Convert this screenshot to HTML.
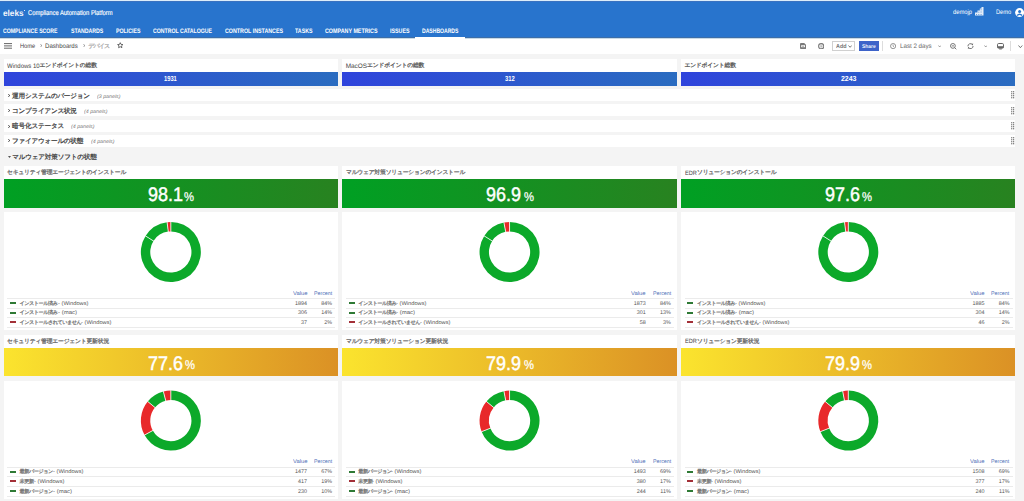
<!DOCTYPE html><html><head><meta charset="utf-8"><style>
*{margin:0;padding:0;box-sizing:border-box}
html,body{width:1024px;height:501px;overflow:hidden;background:#f4f4f4;font-family:"Liberation Sans",sans-serif;color:#333;text-rendering:geometricPrecision}
.a{position:absolute;white-space:nowrap}
.r{position:absolute}
.j{display:inline-block;text-align:center}
</style></head><body>
<div class="r" style="left:0;top:0;width:1024px;height:1px;background:#dcedfa"></div>
<div class="r" style="left:0;top:1px;width:1024px;height:1px;background:#3a72c0"></div>
<div class="r" style="left:0;top:2px;width:1024px;height:35px;background:#2874cd"></div>
<div class="a" style="left:2.90px;top:8.50px;font-size:8.6px;line-height:8.6px;color:#f2f6fc;font-weight:bold;transform:scaleX(0.9528);transform-origin:0 0;">eleks</div>
<div class="r" style="left:24.2px;top:9.8px;width:0.9px;height:1.5px;background:#fff;opacity:.85"></div>
<div class="a" style="left:28.00px;top:10.50px;font-size:6.9px;line-height:6.9px;color:#fff;font-weight:normal;transform:scaleX(0.8420);transform-origin:0 0;-webkit-text-stroke:0.15px #fff">Compliance Automation Platform</div>
<div class="a" style="left:3.30px;top:28.50px;font-size:6.5px;line-height:6.5px;color:#fff;font-weight:bold;transform:scaleX(0.7942);transform-origin:0 0;">COMPLIANCE SCORE</div>
<div class="a" style="left:70.90px;top:28.50px;font-size:6.5px;line-height:6.5px;color:#fff;font-weight:bold;transform:scaleX(0.8009);transform-origin:0 0;">STANDARDS</div>
<div class="a" style="left:116.00px;top:28.50px;font-size:6.5px;line-height:6.5px;color:#fff;font-weight:bold;transform:scaleX(0.8074);transform-origin:0 0;">POLICIES</div>
<div class="a" style="left:153.00px;top:28.50px;font-size:6.5px;line-height:6.5px;color:#fff;font-weight:bold;transform:scaleX(0.7970);transform-origin:0 0;">CONTROL CATALOGUE</div>
<div class="a" style="left:224.50px;top:28.50px;font-size:6.5px;line-height:6.5px;color:#fff;font-weight:bold;transform:scaleX(0.8180);transform-origin:0 0;">CONTROL INSTANCES</div>
<div class="a" style="left:295.00px;top:28.50px;font-size:6.5px;line-height:6.5px;color:#fff;font-weight:bold;transform:scaleX(0.8116);transform-origin:0 0;">TASKS</div>
<div class="a" style="left:325.00px;top:28.50px;font-size:6.5px;line-height:6.5px;color:#fff;font-weight:bold;transform:scaleX(0.8243);transform-origin:0 0;">COMPANY METRICS</div>
<div class="a" style="left:390.00px;top:28.50px;font-size:6.5px;line-height:6.5px;color:#fff;font-weight:bold;transform:scaleX(0.8178);transform-origin:0 0;">ISSUES</div>
<div class="a" style="left:422.00px;top:28.50px;font-size:6.5px;line-height:6.5px;color:#fff;font-weight:bold;transform:scaleX(0.7812);transform-origin:0 0;">DASHBOARDS</div>
<div class="a" style="left:952.90px;top:9.50px;font-size:6.4px;line-height:6.4px;color:#fff;font-weight:normal;transform:scaleX(0.9109);transform-origin:0 0;">demojp</div>
<svg class="a" style="left:975px;top:7.3px" width="8.5" height="8.5" viewBox="0 0 8.5 8.5"><path d="M0,8.5 V5.5 H2.5 V3.5 H4.8 V1.5 H6.5 V0 H8.5 V8.5 Z" fill="#e3ecf8"/><path d="M1,7.5 h1 M3.3,7.5 h1 M5.6,7.5 h1 M5.6,5 h1 M3.3,5.2 h1 M5.6,2.8 h1" stroke="#2874cd" stroke-width="0.7"/></svg>
<div class="a" style="left:996.00px;top:9.50px;font-size:6.4px;line-height:6.4px;color:#fff;font-weight:normal;transform:scaleX(0.8908);transform-origin:0 0;">Demo</div>
<svg class="a" style="left:1014.5px;top:8px" width="10" height="10" viewBox="0 0 10 10"><circle cx="4.6" cy="4.6" r="4.5" fill="#fff"/><circle cx="4.6" cy="3.5" r="1.5" fill="#2874cd"/><path d="M2.1,7.6 Q4.6,4.9 7.1,7.6" stroke="#2874cd" stroke-width="1.4" fill="none"/></svg>
<div class="r" style="left:0;top:37px;width:1024px;height:1px;background:#3d6ea8"></div>
<div class="r" style="left:0;top:38px;width:1024px;height:1px;background:#c8dae6"></div>
<div class="r" style="left:0;top:39px;width:1024px;height:14.5px;background:#fff"></div>
<div class="r" style="left:415.3px;top:37.2px;width:49.3px;height:1.8px;background:#fff"></div>
<svg class="a" style="left:3.8px;top:43.2px" width="8.2" height="6" viewBox="0 0 8.2 6"><path d="M0,0.6 H8.2 M0,2.9 H8.2 M0,5.2 H8.2" stroke="#555" stroke-width="0.9"/></svg>
<div class="a" style="left:19.70px;top:43.50px;font-size:6.4px;line-height:6.4px;color:#444;font-weight:normal;transform:scaleX(0.8908);transform-origin:0 0;">Home</div>
<svg class="a" style="left:39.5px;top:44px" width="2.6" height="3.2" viewBox="0 0 2.6 3.2"><path d="M0.4,0.3 L2,1.6 L0.4,2.9" fill="none" stroke="#777" stroke-width="0.75"/></svg>
<div class="a" style="left:45.00px;top:43.50px;font-size:6.4px;line-height:6.4px;color:#444;font-weight:normal;transform:scaleX(0.9487);transform-origin:0 0;">Dashboards</div>
<svg class="a" style="left:82.7px;top:44px" width="2.6" height="3.2" viewBox="0 0 2.6 3.2"><path d="M0.4,0.3 L2,1.6 L0.4,2.9" fill="none" stroke="#777" stroke-width="0.75"/></svg>
<div class="a" style="left:88.20px;top:43.50px;font-size:6.1px;line-height:6.1px;color:#999;font-weight:normal;"><span class="j" style="width:5.30px;color:#aaa;-webkit-text-stroke:0.25px #aaa">デ</span><span class="j" style="width:5.30px;color:#aaa;-webkit-text-stroke:0.25px #aaa">バ</span><span class="j" style="width:5.30px;color:#aaa;-webkit-text-stroke:0.25px #aaa">イ</span><span class="j" style="width:5.30px;color:#aaa;-webkit-text-stroke:0.25px #aaa">ス</span></div>
<svg class="a" style="left:117.3px;top:42.3px" width="6.5" height="6.5" viewBox="0 0 24 24"><path d="M12,2.5 L14.9,8.9 L21.8,9.6 L16.6,14.2 L18.1,21 L12,17.5 L5.9,21 L7.4,14.2 L2.2,9.6 L9.1,8.9 Z" fill="none" stroke="#333" stroke-width="2.6" stroke-linejoin="round"/></svg>
<svg class="a" style="left:800px;top:43px" width="6.2" height="6" viewBox="0 0 6.2 6"><path d="M0.9,0 H4.2 L6.2,1.8 V5.1 Q6.2,6 5.3,6 H0.9 Q0,6 0,5.1 V0.9 Q0,0 0.9,0 Z" fill="#7a7a7a"/><rect x="1.2" y="2.2" width="3.8" height="2" fill="#fff"/><rect x="2.1" y="2.8" width="2" height="0.9" fill="#999"/></svg>
<svg class="a" style="left:817.8px;top:42.9px" width="6.4" height="6.4" viewBox="0 0 6.4 6.4"><circle cx="3.2" cy="3.2" r="2.6" fill="none" stroke="#7a7a7a" stroke-width="1.1"/><circle cx="3.2" cy="3.2" r="1.3" fill="none" stroke="#bbb" stroke-width="0.6"/><circle cx="3.2" cy="3.2" r="0.6" fill="#888"/></svg>
<div class="r" style="left:832px;top:41.3px;width:23.4px;height:9.3px;border:0.8px solid #d0d0d0;background:#fff"></div>
<div class="a" style="left:835.50px;top:44.50px;font-size:5.8px;line-height:5.8px;color:#777;font-weight:bold;transform:scaleX(0.9307);transform-origin:0 0;">Add</div>
<svg class="a" style="left:847.5px;top:45.3px" width="4.2" height="2.8" viewBox="-0.5 -0.5 4.2 2.8"><path d="M0,0 L1.6,1.8 L3.2,0" fill="none" stroke="#555" stroke-width="0.8"/></svg>
<div class="r" style="left:858.9px;top:41.3px;width:20px;height:9.5px;background:#3d63c9"></div>
<div class="a" style="left:862.20px;top:44.50px;font-size:5.3px;line-height:5.3px;color:#fff;font-weight:bold;transform:scaleX(0.9366);transform-origin:0 0;opacity:.92">Share</div>
<div class="r" style="left:882.3px;top:41px;width:0.8px;height:10px;background:#ddd"></div>
<svg class="a" style="left:889.9px;top:43px" width="6.2" height="6.2" viewBox="0 0 6 6"><circle cx="3" cy="3" r="2.5" fill="none" stroke="#777" stroke-width="0.75"/><path d="M3,1.6 V3.1 L3.9,3.9" stroke="#777" stroke-width="0.65" fill="none"/></svg>
<div class="a" style="left:900.00px;top:43.50px;font-size:6.4px;line-height:6.4px;color:#666;font-weight:normal;transform:scaleX(0.9698);transform-origin:0 0;">Last 2 days</div>
<svg class="a" style="left:937.8px;top:45.3px" width="3.4" height="2.5" viewBox="-0.5 -0.5 3.4 2.5"><path d="M0,0 L1.2,1.5 L2.4,0" fill="none" stroke="#777" stroke-width="0.7"/></svg>
<svg class="a" style="left:949.5px;top:42.8px" width="7" height="7" viewBox="0 0 7 7"><circle cx="2.9" cy="2.9" r="2.4" fill="none" stroke="#666" stroke-width="0.9"/><path d="M1.8,2.9 H4 M4.6,4.6 L6.3,6.3" stroke="#666" stroke-width="0.9"/></svg>
<svg class="a" style="left:967px;top:43px" width="7" height="6.3" viewBox="0 0 7 6.3"><path d="M0.9,3.3 A2.6,2.6 0 0 1 5.5,1.6 M6.1,3 A2.6,2.6 0 0 1 1.5,4.7" stroke="#666" stroke-width="0.9" fill="none"/><path d="M4.4,1 L6.2,0.6 L5.9,2.6Z M2.6,5.3 L0.8,5.7 L1.1,3.7Z" fill="#666"/></svg>
<svg class="a" style="left:983.5px;top:45.3px" width="3.5" height="2.5" viewBox="-0.5 -0.5 3.5 2.5"><path d="M0,0 L1.25,1.5 L2.5,0" fill="none" stroke="#777" stroke-width="0.7"/></svg>
<svg class="a" style="left:997px;top:43px" width="7" height="6.5" viewBox="0 0 7 6.5"><rect x="0.5" y="0.5" width="6" height="4.6" rx="1.2" fill="#fff" stroke="#666" stroke-width="1"/><rect x="0.5" y="3.2" width="6" height="1.9" fill="#666"/><path d="M2.2,6 H4.8" stroke="#666" stroke-width="0.9"/></svg>
<div class="r" style="left:1009.6px;top:41px;width:0.8px;height:10px;background:#ddd"></div>
<svg class="a" style="left:1018px;top:44.8px" width="4.8" height="3.2" viewBox="-0.5 -0.5 4.8 3.2"><path d="M0,0 L1.9,2.2 L3.8,0" fill="none" stroke="#555" stroke-width="0.8"/></svg>
<div class="r" style="left:3.7px;top:59px;width:334.3px;height:26.8px;background:#fff"></div>
<div class="a" style="left:7.00px;top:63.50px;font-size:6.4px;line-height:6.4px;color:#444;font-weight:normal;transform:scaleX(0.9364);transform-origin:0 0;">Windows 10</div>
<div class="a" style="left:39.60px;top:63.50px;font-size:5.8px;line-height:5.8px;color:#444;font-weight:normal;"><span class="j" style="width:5.74px;color:#5a5a5a;-webkit-text-stroke:0.25px #5a5a5a">エ</span><span class="j" style="width:5.74px;color:#5a5a5a;-webkit-text-stroke:0.25px #5a5a5a">ン</span><span class="j" style="width:5.74px;color:#5a5a5a;-webkit-text-stroke:0.25px #5a5a5a">ド</span><span class="j" style="width:5.74px;color:#5a5a5a;-webkit-text-stroke:0.25px #5a5a5a">ポ</span><span class="j" style="width:5.74px;color:#5a5a5a;-webkit-text-stroke:0.25px #5a5a5a">イ</span><span class="j" style="width:5.74px;color:#5a5a5a;-webkit-text-stroke:0.25px #5a5a5a">ン</span><span class="j" style="width:5.74px;color:#5a5a5a;-webkit-text-stroke:0.25px #5a5a5a">ト</span><span class="j" style="width:5.74px;color:#5a5a5a;-webkit-text-stroke:0.25px #5a5a5a">の</span><span class="j" style="width:5.74px;color:#5a5a5a;-webkit-text-stroke:0.25px #5a5a5a">総</span><span class="j" style="width:5.74px;color:#5a5a5a;-webkit-text-stroke:0.25px #5a5a5a">数</span></div>
<div class="r" style="left:3.7px;top:71.8px;width:334.3px;height:14px;background:linear-gradient(90deg,#2f44dc,#2a6cc0)"></div>
<div class="a" style="left:164.45px;top:74.50px;font-size:7.3px;line-height:7.3px;color:#fff;font-weight:bold;transform:scaleX(0.7885);transform-origin:0 0;">1931</div>
<div class="r" style="left:342.4px;top:59px;width:334.30000000000007px;height:26.8px;background:#fff"></div>
<div class="a" style="left:345.70px;top:63.50px;font-size:6.4px;line-height:6.4px;color:#444;font-weight:normal;">MacOS</div>
<div class="a" style="left:367.01px;top:63.50px;font-size:5.8px;line-height:5.8px;color:#444;font-weight:normal;"><span class="j" style="width:5.74px;color:#5a5a5a;-webkit-text-stroke:0.25px #5a5a5a">エ</span><span class="j" style="width:5.74px;color:#5a5a5a;-webkit-text-stroke:0.25px #5a5a5a">ン</span><span class="j" style="width:5.74px;color:#5a5a5a;-webkit-text-stroke:0.25px #5a5a5a">ド</span><span class="j" style="width:5.74px;color:#5a5a5a;-webkit-text-stroke:0.25px #5a5a5a">ポ</span><span class="j" style="width:5.74px;color:#5a5a5a;-webkit-text-stroke:0.25px #5a5a5a">イ</span><span class="j" style="width:5.74px;color:#5a5a5a;-webkit-text-stroke:0.25px #5a5a5a">ン</span><span class="j" style="width:5.74px;color:#5a5a5a;-webkit-text-stroke:0.25px #5a5a5a">ト</span><span class="j" style="width:5.74px;color:#5a5a5a;-webkit-text-stroke:0.25px #5a5a5a">の</span><span class="j" style="width:5.74px;color:#5a5a5a;-webkit-text-stroke:0.25px #5a5a5a">総</span><span class="j" style="width:5.74px;color:#5a5a5a;-webkit-text-stroke:0.25px #5a5a5a">数</span></div>
<div class="r" style="left:342.4px;top:71.8px;width:334.30000000000007px;height:14px;background:linear-gradient(90deg,#2f44dc,#2a6cc0)"></div>
<div class="a" style="left:504.65px;top:74.50px;font-size:7.3px;line-height:7.3px;color:#fff;font-weight:bold;transform:scaleX(0.8041);transform-origin:0 0;">312</div>
<div class="r" style="left:681.1px;top:59px;width:334.4px;height:26.8px;background:#fff"></div>
<div class="a" style="left:684.40px;top:63.50px;font-size:5.8px;line-height:5.8px;color:#444;font-weight:normal;"><span class="j" style="width:5.74px;color:#5a5a5a;-webkit-text-stroke:0.25px #5a5a5a">エ</span><span class="j" style="width:5.74px;color:#5a5a5a;-webkit-text-stroke:0.25px #5a5a5a">ン</span><span class="j" style="width:5.74px;color:#5a5a5a;-webkit-text-stroke:0.25px #5a5a5a">ド</span><span class="j" style="width:5.74px;color:#5a5a5a;-webkit-text-stroke:0.25px #5a5a5a">ポ</span><span class="j" style="width:5.74px;color:#5a5a5a;-webkit-text-stroke:0.25px #5a5a5a">イ</span><span class="j" style="width:5.74px;color:#5a5a5a;-webkit-text-stroke:0.25px #5a5a5a">ン</span><span class="j" style="width:5.74px;color:#5a5a5a;-webkit-text-stroke:0.25px #5a5a5a">ト</span><span class="j" style="width:5.74px;color:#5a5a5a;-webkit-text-stroke:0.25px #5a5a5a">総</span><span class="j" style="width:5.74px;color:#5a5a5a;-webkit-text-stroke:0.25px #5a5a5a">数</span></div>
<div class="r" style="left:681.1px;top:71.8px;width:334.4px;height:14px;background:linear-gradient(90deg,#2f44dc,#2a6cc0)"></div>
<div class="a" style="left:840.55px;top:74.50px;font-size:7.3px;line-height:7.3px;color:#fff;font-weight:bold;transform:scaleX(0.9548);transform-origin:0 0;">2243</div>
<div class="r" style="left:3.7px;top:88.5px;width:1011.8px;height:12.700000000000003px;background:#fff"></div>
<svg class="a" style="left:8.2px;top:94.10000000000001px" width="2.2" height="3" viewBox="0 0 2.2 3"><path d="M0.3,0.2 L1.8,1.5 L0.3,2.8" fill="none" stroke="#333" stroke-width="0.95"/></svg>
<div class="a" style="left:12.10px;top:93.50px;font-size:6.6px;line-height:6.6px;color:#444;font-weight:normal;"><span class="j" style="width:6.47px;color:#444;-webkit-text-stroke:0.25px #444">運</span><span class="j" style="width:6.47px;color:#444;-webkit-text-stroke:0.25px #444">用</span><span class="j" style="width:6.47px;color:#444;-webkit-text-stroke:0.25px #444">シ</span><span class="j" style="width:6.47px;color:#444;-webkit-text-stroke:0.25px #444">ス</span><span class="j" style="width:6.47px;color:#444;-webkit-text-stroke:0.25px #444">テ</span><span class="j" style="width:6.47px;color:#444;-webkit-text-stroke:0.25px #444">ム</span><span class="j" style="width:6.47px;color:#444;-webkit-text-stroke:0.25px #444">の</span><span class="j" style="width:6.47px;color:#444;-webkit-text-stroke:0.25px #444">バ</span><span class="j" style="width:6.47px;color:#444;-webkit-text-stroke:0.25px #444">ー</span><span class="j" style="width:6.47px;color:#444;-webkit-text-stroke:0.25px #444">ジ</span><span class="j" style="width:6.47px;color:#444;-webkit-text-stroke:0.25px #444">ョ</span><span class="j" style="width:6.47px;color:#444;-webkit-text-stroke:0.25px #444">ン</span></div>
<div class="a" style="left:97.10px;top:94.50px;font-size:5.0px;line-height:5.0px;color:#777;font-weight:normal;font-style:italic;transform:scaleX(1.0569);transform-origin:0 0;">(3 panels)</div>
<svg class="a" style="left:1011.3px;top:91.4px" width="3.4" height="8" viewBox="0 0 3.4 8"><rect x="0.2" y="0.2" width="1.1" height="1.1" fill="#555"/><rect x="0.2" y="2.2" width="1.1" height="1.1" fill="#555"/><rect x="0.2" y="4.2" width="1.1" height="1.1" fill="#555"/><rect x="0.2" y="6.2" width="1.1" height="1.1" fill="#555"/><rect x="2.1" y="0.2" width="1.1" height="1.1" fill="#555"/><rect x="2.1" y="2.2" width="1.1" height="1.1" fill="#555"/><rect x="2.1" y="4.2" width="1.1" height="1.1" fill="#555"/><rect x="2.1" y="6.2" width="1.1" height="1.1" fill="#555"/></svg>
<div class="r" style="left:3.7px;top:104px;width:1011.8px;height:12.3px;background:#fff"></div>
<svg class="a" style="left:8.2px;top:109.3px" width="2.2" height="3" viewBox="0 0 2.2 3"><path d="M0.3,0.2 L1.8,1.5 L0.3,2.8" fill="none" stroke="#333" stroke-width="0.95"/></svg>
<div class="a" style="left:12.10px;top:108.50px;font-size:6.6px;line-height:6.6px;color:#444;font-weight:normal;"><span class="j" style="width:6.47px;color:#444;-webkit-text-stroke:0.25px #444">コ</span><span class="j" style="width:6.47px;color:#444;-webkit-text-stroke:0.25px #444">ン</span><span class="j" style="width:6.47px;color:#444;-webkit-text-stroke:0.25px #444">プ</span><span class="j" style="width:6.47px;color:#444;-webkit-text-stroke:0.25px #444">ラ</span><span class="j" style="width:6.47px;color:#444;-webkit-text-stroke:0.25px #444">イ</span><span class="j" style="width:6.47px;color:#444;-webkit-text-stroke:0.25px #444">ア</span><span class="j" style="width:6.47px;color:#444;-webkit-text-stroke:0.25px #444">ン</span><span class="j" style="width:6.47px;color:#444;-webkit-text-stroke:0.25px #444">ス</span><span class="j" style="width:6.47px;color:#444;-webkit-text-stroke:0.25px #444">状</span><span class="j" style="width:6.47px;color:#444;-webkit-text-stroke:0.25px #444">況</span></div>
<div class="a" style="left:84.40px;top:109.50px;font-size:5.0px;line-height:5.0px;color:#777;font-weight:normal;font-style:italic;transform:scaleX(1.0569);transform-origin:0 0;">(4 panels)</div>
<svg class="a" style="left:1011.3px;top:106.6px" width="3.4" height="8" viewBox="0 0 3.4 8"><rect x="0.2" y="0.2" width="1.1" height="1.1" fill="#555"/><rect x="0.2" y="2.2" width="1.1" height="1.1" fill="#555"/><rect x="0.2" y="4.2" width="1.1" height="1.1" fill="#555"/><rect x="0.2" y="6.2" width="1.1" height="1.1" fill="#555"/><rect x="2.1" y="0.2" width="1.1" height="1.1" fill="#555"/><rect x="2.1" y="2.2" width="1.1" height="1.1" fill="#555"/><rect x="2.1" y="4.2" width="1.1" height="1.1" fill="#555"/><rect x="2.1" y="6.2" width="1.1" height="1.1" fill="#555"/></svg>
<div class="r" style="left:3.7px;top:119.7px;width:1011.8px;height:12.3px;background:#fff"></div>
<svg class="a" style="left:8.2px;top:124.5px" width="2.2" height="3" viewBox="0 0 2.2 3"><path d="M0.3,0.2 L1.8,1.5 L0.3,2.8" fill="none" stroke="#333" stroke-width="0.95"/></svg>
<div class="a" style="left:12.10px;top:123.50px;font-size:6.6px;line-height:6.6px;color:#444;font-weight:normal;"><span class="j" style="width:6.47px;color:#444;-webkit-text-stroke:0.25px #444">暗</span><span class="j" style="width:6.47px;color:#444;-webkit-text-stroke:0.25px #444">号</span><span class="j" style="width:6.47px;color:#444;-webkit-text-stroke:0.25px #444">化</span><span class="j" style="width:6.47px;color:#444;-webkit-text-stroke:0.25px #444">ス</span><span class="j" style="width:6.47px;color:#444;-webkit-text-stroke:0.25px #444">テ</span><span class="j" style="width:6.47px;color:#444;-webkit-text-stroke:0.25px #444">ー</span><span class="j" style="width:6.47px;color:#444;-webkit-text-stroke:0.25px #444">タ</span><span class="j" style="width:6.47px;color:#444;-webkit-text-stroke:0.25px #444">ス</span></div>
<div class="a" style="left:71.00px;top:124.50px;font-size:5.0px;line-height:5.0px;color:#777;font-weight:normal;font-style:italic;transform:scaleX(1.0569);transform-origin:0 0;">(4 panels)</div>
<svg class="a" style="left:1011.3px;top:121.8px" width="3.4" height="8" viewBox="0 0 3.4 8"><rect x="0.2" y="0.2" width="1.1" height="1.1" fill="#555"/><rect x="0.2" y="2.2" width="1.1" height="1.1" fill="#555"/><rect x="0.2" y="4.2" width="1.1" height="1.1" fill="#555"/><rect x="0.2" y="6.2" width="1.1" height="1.1" fill="#555"/><rect x="2.1" y="0.2" width="1.1" height="1.1" fill="#555"/><rect x="2.1" y="2.2" width="1.1" height="1.1" fill="#555"/><rect x="2.1" y="4.2" width="1.1" height="1.1" fill="#555"/><rect x="2.1" y="6.2" width="1.1" height="1.1" fill="#555"/></svg>
<div class="r" style="left:3.7px;top:135px;width:1011.8px;height:12.3px;background:#fff"></div>
<svg class="a" style="left:8.2px;top:139.39999999999998px" width="2.2" height="3" viewBox="0 0 2.2 3"><path d="M0.3,0.2 L1.8,1.5 L0.3,2.8" fill="none" stroke="#333" stroke-width="0.95"/></svg>
<div class="a" style="left:12.10px;top:138.50px;font-size:6.6px;line-height:6.6px;color:#444;font-weight:normal;"><span class="j" style="width:6.47px;color:#444;-webkit-text-stroke:0.25px #444">フ</span><span class="j" style="width:6.47px;color:#444;-webkit-text-stroke:0.25px #444">ァ</span><span class="j" style="width:6.47px;color:#444;-webkit-text-stroke:0.25px #444">イ</span><span class="j" style="width:6.47px;color:#444;-webkit-text-stroke:0.25px #444">ア</span><span class="j" style="width:6.47px;color:#444;-webkit-text-stroke:0.25px #444">ウ</span><span class="j" style="width:6.47px;color:#444;-webkit-text-stroke:0.25px #444">ォ</span><span class="j" style="width:6.47px;color:#444;-webkit-text-stroke:0.25px #444">ー</span><span class="j" style="width:6.47px;color:#444;-webkit-text-stroke:0.25px #444">ル</span><span class="j" style="width:6.47px;color:#444;-webkit-text-stroke:0.25px #444">の</span><span class="j" style="width:6.47px;color:#444;-webkit-text-stroke:0.25px #444">状</span><span class="j" style="width:6.47px;color:#444;-webkit-text-stroke:0.25px #444">態</span></div>
<div class="a" style="left:91.10px;top:139.50px;font-size:5.0px;line-height:5.0px;color:#777;font-weight:normal;font-style:italic;transform:scaleX(1.0569);transform-origin:0 0;">(4 panels)</div>
<svg class="a" style="left:1011.3px;top:136.7px" width="3.4" height="8" viewBox="0 0 3.4 8"><rect x="0.2" y="0.2" width="1.1" height="1.1" fill="#555"/><rect x="0.2" y="2.2" width="1.1" height="1.1" fill="#555"/><rect x="0.2" y="4.2" width="1.1" height="1.1" fill="#555"/><rect x="0.2" y="6.2" width="1.1" height="1.1" fill="#555"/><rect x="2.1" y="0.2" width="1.1" height="1.1" fill="#555"/><rect x="2.1" y="2.2" width="1.1" height="1.1" fill="#555"/><rect x="2.1" y="4.2" width="1.1" height="1.1" fill="#555"/><rect x="2.1" y="6.2" width="1.1" height="1.1" fill="#555"/></svg>
<svg class="a" style="left:7.8px;top:155.5px" width="3" height="2" viewBox="0 0 3 2"><path d="M0,0 H3 L1.5,2 Z" fill="#555"/></svg>
<div class="a" style="left:12.20px;top:154.50px;font-size:6.6px;line-height:6.6px;color:#444;font-weight:normal;"><span class="j" style="width:6.50px;color:#444;-webkit-text-stroke:0.25px #444">マ</span><span class="j" style="width:6.50px;color:#444;-webkit-text-stroke:0.25px #444">ル</span><span class="j" style="width:6.50px;color:#444;-webkit-text-stroke:0.25px #444">ウ</span><span class="j" style="width:6.50px;color:#444;-webkit-text-stroke:0.25px #444">ェ</span><span class="j" style="width:6.50px;color:#444;-webkit-text-stroke:0.25px #444">ア</span><span class="j" style="width:6.50px;color:#444;-webkit-text-stroke:0.25px #444">対</span><span class="j" style="width:6.50px;color:#444;-webkit-text-stroke:0.25px #444">策</span><span class="j" style="width:6.50px;color:#444;-webkit-text-stroke:0.25px #444">ソ</span><span class="j" style="width:6.50px;color:#444;-webkit-text-stroke:0.25px #444">フ</span><span class="j" style="width:6.50px;color:#444;-webkit-text-stroke:0.25px #444">ト</span><span class="j" style="width:6.50px;color:#444;-webkit-text-stroke:0.25px #444">の</span><span class="j" style="width:6.50px;color:#444;-webkit-text-stroke:0.25px #444">状</span><span class="j" style="width:6.50px;color:#444;-webkit-text-stroke:0.25px #444">態</span></div>
<div class="r" style="left:3.7px;top:166.3px;width:334.3px;height:41.5px;background:#fff"></div>
<div class="a" style="left:7.20px;top:170.50px;font-size:5.8px;line-height:5.8px;color:#444;font-weight:normal;transform:scaleX(1.0024);transform-origin:0 0;"><span class="j" style="width:5.67px;color:#666;-webkit-text-stroke:0.25px #666">セ</span><span class="j" style="width:5.67px;color:#666;-webkit-text-stroke:0.25px #666">キ</span><span class="j" style="width:5.67px;color:#666;-webkit-text-stroke:0.25px #666">ュ</span><span class="j" style="width:5.67px;color:#666;-webkit-text-stroke:0.25px #666">リ</span><span class="j" style="width:5.67px;color:#666;-webkit-text-stroke:0.25px #666">テ</span><span class="j" style="width:5.67px;color:#666;-webkit-text-stroke:0.25px #666">ィ</span><span class="j" style="width:5.67px;color:#666;-webkit-text-stroke:0.25px #666">管</span><span class="j" style="width:5.67px;color:#666;-webkit-text-stroke:0.25px #666">理</span><span class="j" style="width:5.67px;color:#666;-webkit-text-stroke:0.25px #666">エ</span><span class="j" style="width:5.67px;color:#666;-webkit-text-stroke:0.25px #666">ー</span><span class="j" style="width:5.67px;color:#666;-webkit-text-stroke:0.25px #666">ジ</span><span class="j" style="width:5.67px;color:#666;-webkit-text-stroke:0.25px #666">ェ</span><span class="j" style="width:5.67px;color:#666;-webkit-text-stroke:0.25px #666">ン</span><span class="j" style="width:5.67px;color:#666;-webkit-text-stroke:0.25px #666">ト</span><span class="j" style="width:5.67px;color:#666;-webkit-text-stroke:0.25px #666">の</span><span class="j" style="width:5.67px;color:#666;-webkit-text-stroke:0.25px #666">イ</span><span class="j" style="width:5.67px;color:#666;-webkit-text-stroke:0.25px #666">ン</span><span class="j" style="width:5.67px;color:#666;-webkit-text-stroke:0.25px #666">ス</span><span class="j" style="width:5.67px;color:#666;-webkit-text-stroke:0.25px #666">ト</span><span class="j" style="width:5.67px;color:#666;-webkit-text-stroke:0.25px #666">ー</span><span class="j" style="width:5.67px;color:#666;-webkit-text-stroke:0.25px #666">ル</span></div>
<div class="r" style="left:3.7px;top:179.2px;width:334.3px;height:28.6px;background:linear-gradient(90deg,#00a023,#288220)"></div>
<div class="a" style="left:147.55px;top:185.50px;font-size:19.6px;line-height:19.6px;color:#fff;font-weight:normal;transform:scaleX(0.9177);transform-origin:0 0;-webkit-text-stroke:0.45px #fff">98.1</div>
<div class="a" style="left:184.25px;top:190.50px;font-size:12.8px;line-height:12.8px;color:#fff;font-weight:normal;transform:scaleX(0.8779);transform-origin:0 0;-webkit-text-stroke:0.25px #fff">%</div>
<div class="r" style="left:3.7px;top:212px;width:334.3px;height:118.3px;background:#fff"></div>
<div class="a" style="left:292.50px;top:291.50px;font-size:5.4px;line-height:5.4px;color:#4a6bb5;font-weight:normal;transform:scaleX(1.0828);transform-origin:0 0;">Value</div>
<div class="a" style="left:313.90px;top:291.50px;font-size:5.4px;line-height:5.4px;color:#4a6bb5;font-weight:normal;transform:scaleX(0.9743);transform-origin:0 0;">Percent</div>
<div class="r" style="left:7.2px;top:297.9px;width:328.1px;height:0.6px;background:#ebebeb"></div>
<div class="r" style="left:7.2px;top:307.5px;width:328.1px;height:0.6px;background:#ebebeb"></div>
<div class="r" style="left:7.2px;top:317.09999999999997px;width:328.1px;height:0.6px;background:#ebebeb"></div>
<div class="r" style="left:7.2px;top:327.0px;width:328.1px;height:0.6px;background:#ebebeb"></div>
<div class="r" style="left:10.0px;top:302px;width:6px;height:2px;background:#2f7a35"></div>
<div class="a" style="left:19.50px;top:301.50px;font-size:5.2px;line-height:5.2px;color:#555;font-weight:normal;"><span class="j" style="width:4.75px;color:#777;-webkit-text-stroke:0.25px #777">イ</span><span class="j" style="width:4.75px;color:#777;-webkit-text-stroke:0.25px #777">ン</span><span class="j" style="width:4.75px;color:#777;-webkit-text-stroke:0.25px #777">ス</span><span class="j" style="width:4.75px;color:#777;-webkit-text-stroke:0.25px #777">ト</span><span class="j" style="width:4.75px;color:#777;-webkit-text-stroke:0.25px #777">ー</span><span class="j" style="width:4.75px;color:#777;-webkit-text-stroke:0.25px #777">ル</span><span class="j" style="width:4.75px;color:#777;-webkit-text-stroke:0.25px #777">済</span><span class="j" style="width:4.75px;color:#777;-webkit-text-stroke:0.25px #777">み</span></div>
<div class="a" style="left:57.50px;top:301.50px;font-size:5.4px;line-height:5.4px;color:#555;font-weight:normal;transform:scaleX(1.0603);transform-origin:0 0;"> - (Windows)</div>
<div class="a" style="left:295.00px;top:301.50px;font-size:5.4px;line-height:5.4px;color:#555;font-weight:normal;">1894</div>
<div class="a" style="left:321.20px;top:301.50px;font-size:5.4px;line-height:5.4px;color:#555;font-weight:normal;">84%</div>
<div class="r" style="left:10.0px;top:312px;width:6px;height:2px;background:#2f7a35"></div>
<div class="a" style="left:19.50px;top:310.50px;font-size:5.2px;line-height:5.2px;color:#555;font-weight:normal;"><span class="j" style="width:4.75px;color:#777;-webkit-text-stroke:0.25px #777">イ</span><span class="j" style="width:4.75px;color:#777;-webkit-text-stroke:0.25px #777">ン</span><span class="j" style="width:4.75px;color:#777;-webkit-text-stroke:0.25px #777">ス</span><span class="j" style="width:4.75px;color:#777;-webkit-text-stroke:0.25px #777">ト</span><span class="j" style="width:4.75px;color:#777;-webkit-text-stroke:0.25px #777">ー</span><span class="j" style="width:4.75px;color:#777;-webkit-text-stroke:0.25px #777">ル</span><span class="j" style="width:4.75px;color:#777;-webkit-text-stroke:0.25px #777">済</span><span class="j" style="width:4.75px;color:#777;-webkit-text-stroke:0.25px #777">み</span></div>
<div class="a" style="left:57.50px;top:310.50px;font-size:5.4px;line-height:5.4px;color:#555;font-weight:normal;transform:scaleX(1.1125);transform-origin:0 0;"> - (mac)</div>
<div class="a" style="left:298.00px;top:310.50px;font-size:5.4px;line-height:5.4px;color:#555;font-weight:normal;">306</div>
<div class="a" style="left:321.20px;top:310.50px;font-size:5.4px;line-height:5.4px;color:#555;font-weight:normal;">14%</div>
<div class="r" style="left:10.0px;top:321px;width:6px;height:2px;background:#a33038"></div>
<div class="a" style="left:19.50px;top:320.50px;font-size:5.2px;line-height:5.2px;color:#555;font-weight:normal;"><span class="j" style="width:4.75px;color:#777;-webkit-text-stroke:0.25px #777">イ</span><span class="j" style="width:4.75px;color:#777;-webkit-text-stroke:0.25px #777">ン</span><span class="j" style="width:4.75px;color:#777;-webkit-text-stroke:0.25px #777">ス</span><span class="j" style="width:4.75px;color:#777;-webkit-text-stroke:0.25px #777">ト</span><span class="j" style="width:4.75px;color:#777;-webkit-text-stroke:0.25px #777">ー</span><span class="j" style="width:4.75px;color:#777;-webkit-text-stroke:0.25px #777">ル</span><span class="j" style="width:4.75px;color:#777;-webkit-text-stroke:0.25px #777">さ</span><span class="j" style="width:4.75px;color:#777;-webkit-text-stroke:0.25px #777">れ</span><span class="j" style="width:4.75px;color:#777;-webkit-text-stroke:0.25px #777">て</span><span class="j" style="width:4.75px;color:#777;-webkit-text-stroke:0.25px #777">い</span><span class="j" style="width:4.75px;color:#777;-webkit-text-stroke:0.25px #777">ま</span><span class="j" style="width:4.75px;color:#777;-webkit-text-stroke:0.25px #777">せ</span><span class="j" style="width:4.75px;color:#777;-webkit-text-stroke:0.25px #777">ん</span></div>
<div class="a" style="left:81.25px;top:320.50px;font-size:5.4px;line-height:5.4px;color:#555;font-weight:normal;transform:scaleX(1.0603);transform-origin:0 0;"> - (Windows)</div>
<div class="a" style="left:301.00px;top:320.50px;font-size:5.4px;line-height:5.4px;color:#555;font-weight:normal;">37</div>
<div class="a" style="left:324.20px;top:320.50px;font-size:5.4px;line-height:5.4px;color:#555;font-weight:normal;">2%</div>
<div class="r" style="left:3.7px;top:334.9px;width:334.3px;height:41.5px;background:#fff"></div>
<div class="a" style="left:7.20px;top:339.50px;font-size:5.8px;line-height:5.8px;color:#444;font-weight:normal;transform:scaleX(1.0024);transform-origin:0 0;"><span class="j" style="width:5.67px;color:#666;-webkit-text-stroke:0.25px #666">セ</span><span class="j" style="width:5.67px;color:#666;-webkit-text-stroke:0.25px #666">キ</span><span class="j" style="width:5.67px;color:#666;-webkit-text-stroke:0.25px #666">ュ</span><span class="j" style="width:5.67px;color:#666;-webkit-text-stroke:0.25px #666">リ</span><span class="j" style="width:5.67px;color:#666;-webkit-text-stroke:0.25px #666">テ</span><span class="j" style="width:5.67px;color:#666;-webkit-text-stroke:0.25px #666">ィ</span><span class="j" style="width:5.67px;color:#666;-webkit-text-stroke:0.25px #666">管</span><span class="j" style="width:5.67px;color:#666;-webkit-text-stroke:0.25px #666">理</span><span class="j" style="width:5.67px;color:#666;-webkit-text-stroke:0.25px #666">エ</span><span class="j" style="width:5.67px;color:#666;-webkit-text-stroke:0.25px #666">ー</span><span class="j" style="width:5.67px;color:#666;-webkit-text-stroke:0.25px #666">ジ</span><span class="j" style="width:5.67px;color:#666;-webkit-text-stroke:0.25px #666">ェ</span><span class="j" style="width:5.67px;color:#666;-webkit-text-stroke:0.25px #666">ン</span><span class="j" style="width:5.67px;color:#666;-webkit-text-stroke:0.25px #666">ト</span><span class="j" style="width:5.67px;color:#666;-webkit-text-stroke:0.25px #666">更</span><span class="j" style="width:5.67px;color:#666;-webkit-text-stroke:0.25px #666">新</span><span class="j" style="width:5.67px;color:#666;-webkit-text-stroke:0.25px #666">状</span><span class="j" style="width:5.67px;color:#666;-webkit-text-stroke:0.25px #666">況</span></div>
<div class="r" style="left:3.7px;top:347.79999999999995px;width:334.3px;height:28.6px;background:linear-gradient(90deg,#fbe42e,#db9125)"></div>
<div class="a" style="left:147.55px;top:354.50px;font-size:19.6px;line-height:19.6px;color:#fff;font-weight:normal;transform:scaleX(0.9177);transform-origin:0 0;-webkit-text-stroke:0.45px #fff">77.6</div>
<div class="a" style="left:184.85px;top:358.50px;font-size:12.8px;line-height:12.8px;color:#fff;font-weight:normal;transform:scaleX(0.8779);transform-origin:0 0;-webkit-text-stroke:0.25px #fff">%</div>
<div class="r" style="left:3.7px;top:380.6px;width:334.3px;height:118.3px;background:#fff"></div>
<div class="a" style="left:292.50px;top:459.50px;font-size:5.4px;line-height:5.4px;color:#4a6bb5;font-weight:normal;transform:scaleX(1.0828);transform-origin:0 0;">Value</div>
<div class="a" style="left:313.90px;top:459.50px;font-size:5.4px;line-height:5.4px;color:#4a6bb5;font-weight:normal;transform:scaleX(0.9743);transform-origin:0 0;">Percent</div>
<div class="r" style="left:7.2px;top:466.49999999999994px;width:328.1px;height:0.6px;background:#ebebeb"></div>
<div class="r" style="left:7.2px;top:476.09999999999997px;width:328.1px;height:0.6px;background:#ebebeb"></div>
<div class="r" style="left:7.2px;top:485.7px;width:328.1px;height:0.6px;background:#ebebeb"></div>
<div class="r" style="left:7.2px;top:495.59999999999997px;width:328.1px;height:0.6px;background:#ebebeb"></div>
<div class="r" style="left:10.0px;top:471px;width:6px;height:2px;background:#2f7a35"></div>
<div class="a" style="left:19.50px;top:469.50px;font-size:5.2px;line-height:5.2px;color:#555;font-weight:normal;"><span class="j" style="width:4.75px;color:#777;-webkit-text-stroke:0.25px #777">最</span><span class="j" style="width:4.75px;color:#777;-webkit-text-stroke:0.25px #777">新</span><span class="j" style="width:4.75px;color:#777;-webkit-text-stroke:0.25px #777">バ</span><span class="j" style="width:4.75px;color:#777;-webkit-text-stroke:0.25px #777">ー</span><span class="j" style="width:4.75px;color:#777;-webkit-text-stroke:0.25px #777">ジ</span><span class="j" style="width:4.75px;color:#777;-webkit-text-stroke:0.25px #777">ョ</span><span class="j" style="width:4.75px;color:#777;-webkit-text-stroke:0.25px #777">ン</span></div>
<div class="a" style="left:52.75px;top:469.50px;font-size:5.4px;line-height:5.4px;color:#555;font-weight:normal;transform:scaleX(1.0603);transform-origin:0 0;"> - (Windows)</div>
<div class="a" style="left:295.00px;top:469.50px;font-size:5.4px;line-height:5.4px;color:#555;font-weight:normal;">1477</div>
<div class="a" style="left:321.20px;top:469.50px;font-size:5.4px;line-height:5.4px;color:#555;font-weight:normal;">67%</div>
<div class="r" style="left:10.0px;top:480px;width:6px;height:2px;background:#a33038"></div>
<div class="a" style="left:19.50px;top:479.50px;font-size:5.2px;line-height:5.2px;color:#555;font-weight:normal;"><span class="j" style="width:4.75px;color:#777;-webkit-text-stroke:0.25px #777">未</span><span class="j" style="width:4.75px;color:#777;-webkit-text-stroke:0.25px #777">更</span><span class="j" style="width:4.75px;color:#777;-webkit-text-stroke:0.25px #777">新</span></div>
<div class="a" style="left:33.75px;top:479.50px;font-size:5.4px;line-height:5.4px;color:#555;font-weight:normal;transform:scaleX(1.0603);transform-origin:0 0;"> - (Windows)</div>
<div class="a" style="left:298.00px;top:479.50px;font-size:5.4px;line-height:5.4px;color:#555;font-weight:normal;">417</div>
<div class="a" style="left:321.20px;top:479.50px;font-size:5.4px;line-height:5.4px;color:#555;font-weight:normal;">19%</div>
<div class="r" style="left:10.0px;top:490px;width:6px;height:2px;background:#2f7a35"></div>
<div class="a" style="left:19.50px;top:489.50px;font-size:5.2px;line-height:5.2px;color:#555;font-weight:normal;"><span class="j" style="width:4.75px;color:#777;-webkit-text-stroke:0.25px #777">最</span><span class="j" style="width:4.75px;color:#777;-webkit-text-stroke:0.25px #777">新</span><span class="j" style="width:4.75px;color:#777;-webkit-text-stroke:0.25px #777">バ</span><span class="j" style="width:4.75px;color:#777;-webkit-text-stroke:0.25px #777">ー</span><span class="j" style="width:4.75px;color:#777;-webkit-text-stroke:0.25px #777">ジ</span><span class="j" style="width:4.75px;color:#777;-webkit-text-stroke:0.25px #777">ョ</span><span class="j" style="width:4.75px;color:#777;-webkit-text-stroke:0.25px #777">ン</span></div>
<div class="a" style="left:52.75px;top:489.50px;font-size:5.4px;line-height:5.4px;color:#555;font-weight:normal;transform:scaleX(1.1125);transform-origin:0 0;"> - (mac)</div>
<div class="a" style="left:298.00px;top:489.50px;font-size:5.4px;line-height:5.4px;color:#555;font-weight:normal;">230</div>
<div class="a" style="left:321.20px;top:489.50px;font-size:5.4px;line-height:5.4px;color:#555;font-weight:normal;">10%</div>
<div class="r" style="left:342.4px;top:166.3px;width:334.30000000000007px;height:41.5px;background:#fff"></div>
<div class="a" style="left:345.90px;top:170.50px;font-size:5.8px;line-height:5.8px;color:#444;font-weight:normal;transform:scaleX(1.0024);transform-origin:0 0;"><span class="j" style="width:5.67px;color:#666;-webkit-text-stroke:0.25px #666">マ</span><span class="j" style="width:5.67px;color:#666;-webkit-text-stroke:0.25px #666">ル</span><span class="j" style="width:5.67px;color:#666;-webkit-text-stroke:0.25px #666">ウ</span><span class="j" style="width:5.67px;color:#666;-webkit-text-stroke:0.25px #666">ェ</span><span class="j" style="width:5.67px;color:#666;-webkit-text-stroke:0.25px #666">ア</span><span class="j" style="width:5.67px;color:#666;-webkit-text-stroke:0.25px #666">対</span><span class="j" style="width:5.67px;color:#666;-webkit-text-stroke:0.25px #666">策</span><span class="j" style="width:5.67px;color:#666;-webkit-text-stroke:0.25px #666">ソ</span><span class="j" style="width:5.67px;color:#666;-webkit-text-stroke:0.25px #666">リ</span><span class="j" style="width:5.67px;color:#666;-webkit-text-stroke:0.25px #666">ュ</span><span class="j" style="width:5.67px;color:#666;-webkit-text-stroke:0.25px #666">ー</span><span class="j" style="width:5.67px;color:#666;-webkit-text-stroke:0.25px #666">シ</span><span class="j" style="width:5.67px;color:#666;-webkit-text-stroke:0.25px #666">ョ</span><span class="j" style="width:5.67px;color:#666;-webkit-text-stroke:0.25px #666">ン</span><span class="j" style="width:5.67px;color:#666;-webkit-text-stroke:0.25px #666">の</span><span class="j" style="width:5.67px;color:#666;-webkit-text-stroke:0.25px #666">イ</span><span class="j" style="width:5.67px;color:#666;-webkit-text-stroke:0.25px #666">ン</span><span class="j" style="width:5.67px;color:#666;-webkit-text-stroke:0.25px #666">ス</span><span class="j" style="width:5.67px;color:#666;-webkit-text-stroke:0.25px #666">ト</span><span class="j" style="width:5.67px;color:#666;-webkit-text-stroke:0.25px #666">ー</span><span class="j" style="width:5.67px;color:#666;-webkit-text-stroke:0.25px #666">ル</span></div>
<div class="r" style="left:342.4px;top:179.2px;width:334.30000000000007px;height:28.6px;background:linear-gradient(90deg,#00a023,#288220)"></div>
<div class="a" style="left:486.25px;top:185.50px;font-size:19.6px;line-height:19.6px;color:#fff;font-weight:normal;transform:scaleX(0.9177);transform-origin:0 0;-webkit-text-stroke:0.45px #fff">96.9</div>
<div class="a" style="left:523.55px;top:190.50px;font-size:12.8px;line-height:12.8px;color:#fff;font-weight:normal;transform:scaleX(0.8779);transform-origin:0 0;-webkit-text-stroke:0.25px #fff">%</div>
<div class="r" style="left:342.4px;top:212px;width:334.30000000000007px;height:118.3px;background:#fff"></div>
<div class="a" style="left:631.20px;top:291.50px;font-size:5.4px;line-height:5.4px;color:#4a6bb5;font-weight:normal;transform:scaleX(1.0828);transform-origin:0 0;">Value</div>
<div class="a" style="left:652.60px;top:291.50px;font-size:5.4px;line-height:5.4px;color:#4a6bb5;font-weight:normal;transform:scaleX(0.9743);transform-origin:0 0;">Percent</div>
<div class="r" style="left:345.9px;top:297.9px;width:328.1000000000001px;height:0.6px;background:#ebebeb"></div>
<div class="r" style="left:345.9px;top:307.5px;width:328.1000000000001px;height:0.6px;background:#ebebeb"></div>
<div class="r" style="left:345.9px;top:317.09999999999997px;width:328.1000000000001px;height:0.6px;background:#ebebeb"></div>
<div class="r" style="left:345.9px;top:327.0px;width:328.1000000000001px;height:0.6px;background:#ebebeb"></div>
<div class="r" style="left:348.7px;top:302px;width:6px;height:2px;background:#2f7a35"></div>
<div class="a" style="left:358.20px;top:301.50px;font-size:5.2px;line-height:5.2px;color:#555;font-weight:normal;"><span class="j" style="width:4.75px;color:#777;-webkit-text-stroke:0.25px #777">イ</span><span class="j" style="width:4.75px;color:#777;-webkit-text-stroke:0.25px #777">ン</span><span class="j" style="width:4.75px;color:#777;-webkit-text-stroke:0.25px #777">ス</span><span class="j" style="width:4.75px;color:#777;-webkit-text-stroke:0.25px #777">ト</span><span class="j" style="width:4.75px;color:#777;-webkit-text-stroke:0.25px #777">ー</span><span class="j" style="width:4.75px;color:#777;-webkit-text-stroke:0.25px #777">ル</span><span class="j" style="width:4.75px;color:#777;-webkit-text-stroke:0.25px #777">済</span><span class="j" style="width:4.75px;color:#777;-webkit-text-stroke:0.25px #777">み</span></div>
<div class="a" style="left:396.20px;top:301.50px;font-size:5.4px;line-height:5.4px;color:#555;font-weight:normal;transform:scaleX(1.0603);transform-origin:0 0;"> - (Windows)</div>
<div class="a" style="left:633.70px;top:301.50px;font-size:5.4px;line-height:5.4px;color:#555;font-weight:normal;">1873</div>
<div class="a" style="left:659.90px;top:301.50px;font-size:5.4px;line-height:5.4px;color:#555;font-weight:normal;">84%</div>
<div class="r" style="left:348.7px;top:312px;width:6px;height:2px;background:#2f7a35"></div>
<div class="a" style="left:358.20px;top:310.50px;font-size:5.2px;line-height:5.2px;color:#555;font-weight:normal;"><span class="j" style="width:4.75px;color:#777;-webkit-text-stroke:0.25px #777">イ</span><span class="j" style="width:4.75px;color:#777;-webkit-text-stroke:0.25px #777">ン</span><span class="j" style="width:4.75px;color:#777;-webkit-text-stroke:0.25px #777">ス</span><span class="j" style="width:4.75px;color:#777;-webkit-text-stroke:0.25px #777">ト</span><span class="j" style="width:4.75px;color:#777;-webkit-text-stroke:0.25px #777">ー</span><span class="j" style="width:4.75px;color:#777;-webkit-text-stroke:0.25px #777">ル</span><span class="j" style="width:4.75px;color:#777;-webkit-text-stroke:0.25px #777">済</span><span class="j" style="width:4.75px;color:#777;-webkit-text-stroke:0.25px #777">み</span></div>
<div class="a" style="left:396.20px;top:310.50px;font-size:5.4px;line-height:5.4px;color:#555;font-weight:normal;transform:scaleX(1.1125);transform-origin:0 0;"> - (mac)</div>
<div class="a" style="left:636.70px;top:310.50px;font-size:5.4px;line-height:5.4px;color:#555;font-weight:normal;">301</div>
<div class="a" style="left:659.90px;top:310.50px;font-size:5.4px;line-height:5.4px;color:#555;font-weight:normal;">13%</div>
<div class="r" style="left:348.7px;top:321px;width:6px;height:2px;background:#a33038"></div>
<div class="a" style="left:358.20px;top:320.50px;font-size:5.2px;line-height:5.2px;color:#555;font-weight:normal;"><span class="j" style="width:4.75px;color:#777;-webkit-text-stroke:0.25px #777">イ</span><span class="j" style="width:4.75px;color:#777;-webkit-text-stroke:0.25px #777">ン</span><span class="j" style="width:4.75px;color:#777;-webkit-text-stroke:0.25px #777">ス</span><span class="j" style="width:4.75px;color:#777;-webkit-text-stroke:0.25px #777">ト</span><span class="j" style="width:4.75px;color:#777;-webkit-text-stroke:0.25px #777">ー</span><span class="j" style="width:4.75px;color:#777;-webkit-text-stroke:0.25px #777">ル</span><span class="j" style="width:4.75px;color:#777;-webkit-text-stroke:0.25px #777">さ</span><span class="j" style="width:4.75px;color:#777;-webkit-text-stroke:0.25px #777">れ</span><span class="j" style="width:4.75px;color:#777;-webkit-text-stroke:0.25px #777">て</span><span class="j" style="width:4.75px;color:#777;-webkit-text-stroke:0.25px #777">い</span><span class="j" style="width:4.75px;color:#777;-webkit-text-stroke:0.25px #777">ま</span><span class="j" style="width:4.75px;color:#777;-webkit-text-stroke:0.25px #777">せ</span><span class="j" style="width:4.75px;color:#777;-webkit-text-stroke:0.25px #777">ん</span></div>
<div class="a" style="left:419.95px;top:320.50px;font-size:5.4px;line-height:5.4px;color:#555;font-weight:normal;transform:scaleX(1.0603);transform-origin:0 0;"> - (Windows)</div>
<div class="a" style="left:639.70px;top:320.50px;font-size:5.4px;line-height:5.4px;color:#555;font-weight:normal;">58</div>
<div class="a" style="left:662.90px;top:320.50px;font-size:5.4px;line-height:5.4px;color:#555;font-weight:normal;">3%</div>
<div class="r" style="left:342.4px;top:334.9px;width:334.30000000000007px;height:41.5px;background:#fff"></div>
<div class="a" style="left:345.90px;top:339.50px;font-size:5.8px;line-height:5.8px;color:#444;font-weight:normal;transform:scaleX(1.0024);transform-origin:0 0;"><span class="j" style="width:5.67px;color:#666;-webkit-text-stroke:0.25px #666">マ</span><span class="j" style="width:5.67px;color:#666;-webkit-text-stroke:0.25px #666">ル</span><span class="j" style="width:5.67px;color:#666;-webkit-text-stroke:0.25px #666">ウ</span><span class="j" style="width:5.67px;color:#666;-webkit-text-stroke:0.25px #666">ェ</span><span class="j" style="width:5.67px;color:#666;-webkit-text-stroke:0.25px #666">ア</span><span class="j" style="width:5.67px;color:#666;-webkit-text-stroke:0.25px #666">対</span><span class="j" style="width:5.67px;color:#666;-webkit-text-stroke:0.25px #666">策</span><span class="j" style="width:5.67px;color:#666;-webkit-text-stroke:0.25px #666">ソ</span><span class="j" style="width:5.67px;color:#666;-webkit-text-stroke:0.25px #666">リ</span><span class="j" style="width:5.67px;color:#666;-webkit-text-stroke:0.25px #666">ュ</span><span class="j" style="width:5.67px;color:#666;-webkit-text-stroke:0.25px #666">ー</span><span class="j" style="width:5.67px;color:#666;-webkit-text-stroke:0.25px #666">シ</span><span class="j" style="width:5.67px;color:#666;-webkit-text-stroke:0.25px #666">ョ</span><span class="j" style="width:5.67px;color:#666;-webkit-text-stroke:0.25px #666">ン</span><span class="j" style="width:5.67px;color:#666;-webkit-text-stroke:0.25px #666">更</span><span class="j" style="width:5.67px;color:#666;-webkit-text-stroke:0.25px #666">新</span><span class="j" style="width:5.67px;color:#666;-webkit-text-stroke:0.25px #666">状</span><span class="j" style="width:5.67px;color:#666;-webkit-text-stroke:0.25px #666">況</span></div>
<div class="r" style="left:342.4px;top:347.79999999999995px;width:334.30000000000007px;height:28.6px;background:linear-gradient(90deg,#fbe42e,#db9125)"></div>
<div class="a" style="left:486.25px;top:354.50px;font-size:19.6px;line-height:19.6px;color:#fff;font-weight:normal;transform:scaleX(0.9177);transform-origin:0 0;-webkit-text-stroke:0.45px #fff">79.9</div>
<div class="a" style="left:523.55px;top:358.50px;font-size:12.8px;line-height:12.8px;color:#fff;font-weight:normal;transform:scaleX(0.8779);transform-origin:0 0;-webkit-text-stroke:0.25px #fff">%</div>
<div class="r" style="left:342.4px;top:380.6px;width:334.30000000000007px;height:118.3px;background:#fff"></div>
<div class="a" style="left:631.20px;top:459.50px;font-size:5.4px;line-height:5.4px;color:#4a6bb5;font-weight:normal;transform:scaleX(1.0828);transform-origin:0 0;">Value</div>
<div class="a" style="left:652.60px;top:459.50px;font-size:5.4px;line-height:5.4px;color:#4a6bb5;font-weight:normal;transform:scaleX(0.9743);transform-origin:0 0;">Percent</div>
<div class="r" style="left:345.9px;top:466.49999999999994px;width:328.1000000000001px;height:0.6px;background:#ebebeb"></div>
<div class="r" style="left:345.9px;top:476.09999999999997px;width:328.1000000000001px;height:0.6px;background:#ebebeb"></div>
<div class="r" style="left:345.9px;top:485.7px;width:328.1000000000001px;height:0.6px;background:#ebebeb"></div>
<div class="r" style="left:345.9px;top:495.59999999999997px;width:328.1000000000001px;height:0.6px;background:#ebebeb"></div>
<div class="r" style="left:348.7px;top:471px;width:6px;height:2px;background:#2f7a35"></div>
<div class="a" style="left:358.20px;top:469.50px;font-size:5.2px;line-height:5.2px;color:#555;font-weight:normal;"><span class="j" style="width:4.75px;color:#777;-webkit-text-stroke:0.25px #777">最</span><span class="j" style="width:4.75px;color:#777;-webkit-text-stroke:0.25px #777">新</span><span class="j" style="width:4.75px;color:#777;-webkit-text-stroke:0.25px #777">バ</span><span class="j" style="width:4.75px;color:#777;-webkit-text-stroke:0.25px #777">ー</span><span class="j" style="width:4.75px;color:#777;-webkit-text-stroke:0.25px #777">ジ</span><span class="j" style="width:4.75px;color:#777;-webkit-text-stroke:0.25px #777">ョ</span><span class="j" style="width:4.75px;color:#777;-webkit-text-stroke:0.25px #777">ン</span></div>
<div class="a" style="left:391.45px;top:469.50px;font-size:5.4px;line-height:5.4px;color:#555;font-weight:normal;transform:scaleX(1.0603);transform-origin:0 0;"> - (Windows)</div>
<div class="a" style="left:633.70px;top:469.50px;font-size:5.4px;line-height:5.4px;color:#555;font-weight:normal;">1493</div>
<div class="a" style="left:659.90px;top:469.50px;font-size:5.4px;line-height:5.4px;color:#555;font-weight:normal;">69%</div>
<div class="r" style="left:348.7px;top:480px;width:6px;height:2px;background:#a33038"></div>
<div class="a" style="left:358.20px;top:479.50px;font-size:5.2px;line-height:5.2px;color:#555;font-weight:normal;"><span class="j" style="width:4.75px;color:#777;-webkit-text-stroke:0.25px #777">未</span><span class="j" style="width:4.75px;color:#777;-webkit-text-stroke:0.25px #777">更</span><span class="j" style="width:4.75px;color:#777;-webkit-text-stroke:0.25px #777">新</span></div>
<div class="a" style="left:372.45px;top:479.50px;font-size:5.4px;line-height:5.4px;color:#555;font-weight:normal;transform:scaleX(1.0603);transform-origin:0 0;"> - (Windows)</div>
<div class="a" style="left:636.70px;top:479.50px;font-size:5.4px;line-height:5.4px;color:#555;font-weight:normal;">380</div>
<div class="a" style="left:659.90px;top:479.50px;font-size:5.4px;line-height:5.4px;color:#555;font-weight:normal;">17%</div>
<div class="r" style="left:348.7px;top:490px;width:6px;height:2px;background:#2f7a35"></div>
<div class="a" style="left:358.20px;top:489.50px;font-size:5.2px;line-height:5.2px;color:#555;font-weight:normal;"><span class="j" style="width:4.75px;color:#777;-webkit-text-stroke:0.25px #777">最</span><span class="j" style="width:4.75px;color:#777;-webkit-text-stroke:0.25px #777">新</span><span class="j" style="width:4.75px;color:#777;-webkit-text-stroke:0.25px #777">バ</span><span class="j" style="width:4.75px;color:#777;-webkit-text-stroke:0.25px #777">ー</span><span class="j" style="width:4.75px;color:#777;-webkit-text-stroke:0.25px #777">ジ</span><span class="j" style="width:4.75px;color:#777;-webkit-text-stroke:0.25px #777">ョ</span><span class="j" style="width:4.75px;color:#777;-webkit-text-stroke:0.25px #777">ン</span></div>
<div class="a" style="left:391.45px;top:489.50px;font-size:5.4px;line-height:5.4px;color:#555;font-weight:normal;transform:scaleX(1.1125);transform-origin:0 0;"> - (mac)</div>
<div class="a" style="left:636.70px;top:489.50px;font-size:5.4px;line-height:5.4px;color:#555;font-weight:normal;">244</div>
<div class="a" style="left:660.31px;top:489.50px;font-size:5.4px;line-height:5.4px;color:#555;font-weight:normal;">11%</div>
<div class="r" style="left:681.1px;top:166.3px;width:334.4px;height:41.5px;background:#fff"></div>
<div class="a" style="left:684.60px;top:170.50px;font-size:6.2px;line-height:6.2px;color:#444;font-weight:normal;transform:scaleX(0.9099);transform-origin:0 0;">EDR</div>
<div class="a" style="left:696.50px;top:170.50px;font-size:5.8px;line-height:5.8px;color:#444;font-weight:normal;transform:scaleX(1.0024);transform-origin:0 0;"><span class="j" style="width:5.67px;color:#666;-webkit-text-stroke:0.25px #666">ソ</span><span class="j" style="width:5.67px;color:#666;-webkit-text-stroke:0.25px #666">リ</span><span class="j" style="width:5.67px;color:#666;-webkit-text-stroke:0.25px #666">ュ</span><span class="j" style="width:5.67px;color:#666;-webkit-text-stroke:0.25px #666">ー</span><span class="j" style="width:5.67px;color:#666;-webkit-text-stroke:0.25px #666">シ</span><span class="j" style="width:5.67px;color:#666;-webkit-text-stroke:0.25px #666">ョ</span><span class="j" style="width:5.67px;color:#666;-webkit-text-stroke:0.25px #666">ン</span><span class="j" style="width:5.67px;color:#666;-webkit-text-stroke:0.25px #666">の</span><span class="j" style="width:5.67px;color:#666;-webkit-text-stroke:0.25px #666">イ</span><span class="j" style="width:5.67px;color:#666;-webkit-text-stroke:0.25px #666">ン</span><span class="j" style="width:5.67px;color:#666;-webkit-text-stroke:0.25px #666">ス</span><span class="j" style="width:5.67px;color:#666;-webkit-text-stroke:0.25px #666">ト</span><span class="j" style="width:5.67px;color:#666;-webkit-text-stroke:0.25px #666">ー</span><span class="j" style="width:5.67px;color:#666;-webkit-text-stroke:0.25px #666">ル</span></div>
<div class="r" style="left:681.1px;top:179.2px;width:334.4px;height:28.6px;background:linear-gradient(90deg,#00a023,#288220)"></div>
<div class="a" style="left:825.00px;top:185.50px;font-size:19.6px;line-height:19.6px;color:#fff;font-weight:normal;transform:scaleX(0.9177);transform-origin:0 0;-webkit-text-stroke:0.45px #fff">97.6</div>
<div class="a" style="left:862.30px;top:190.50px;font-size:12.8px;line-height:12.8px;color:#fff;font-weight:normal;transform:scaleX(0.8779);transform-origin:0 0;-webkit-text-stroke:0.25px #fff">%</div>
<div class="r" style="left:681.1px;top:212px;width:334.4px;height:118.3px;background:#fff"></div>
<div class="a" style="left:970.00px;top:291.50px;font-size:5.4px;line-height:5.4px;color:#4a6bb5;font-weight:normal;transform:scaleX(1.0828);transform-origin:0 0;">Value</div>
<div class="a" style="left:991.40px;top:291.50px;font-size:5.4px;line-height:5.4px;color:#4a6bb5;font-weight:normal;transform:scaleX(0.9743);transform-origin:0 0;">Percent</div>
<div class="r" style="left:684.6px;top:297.9px;width:328.2px;height:0.6px;background:#ebebeb"></div>
<div class="r" style="left:684.6px;top:307.5px;width:328.2px;height:0.6px;background:#ebebeb"></div>
<div class="r" style="left:684.6px;top:317.09999999999997px;width:328.2px;height:0.6px;background:#ebebeb"></div>
<div class="r" style="left:684.6px;top:327.0px;width:328.2px;height:0.6px;background:#ebebeb"></div>
<div class="r" style="left:687.4px;top:302px;width:6px;height:2px;background:#2f7a35"></div>
<div class="a" style="left:696.90px;top:301.50px;font-size:5.2px;line-height:5.2px;color:#555;font-weight:normal;"><span class="j" style="width:4.75px;color:#777;-webkit-text-stroke:0.25px #777">イ</span><span class="j" style="width:4.75px;color:#777;-webkit-text-stroke:0.25px #777">ン</span><span class="j" style="width:4.75px;color:#777;-webkit-text-stroke:0.25px #777">ス</span><span class="j" style="width:4.75px;color:#777;-webkit-text-stroke:0.25px #777">ト</span><span class="j" style="width:4.75px;color:#777;-webkit-text-stroke:0.25px #777">ー</span><span class="j" style="width:4.75px;color:#777;-webkit-text-stroke:0.25px #777">ル</span><span class="j" style="width:4.75px;color:#777;-webkit-text-stroke:0.25px #777">済</span><span class="j" style="width:4.75px;color:#777;-webkit-text-stroke:0.25px #777">み</span></div>
<div class="a" style="left:734.90px;top:301.50px;font-size:5.4px;line-height:5.4px;color:#555;font-weight:normal;transform:scaleX(1.0603);transform-origin:0 0;"> - (Windows)</div>
<div class="a" style="left:972.50px;top:301.50px;font-size:5.4px;line-height:5.4px;color:#555;font-weight:normal;">1885</div>
<div class="a" style="left:998.70px;top:301.50px;font-size:5.4px;line-height:5.4px;color:#555;font-weight:normal;">84%</div>
<div class="r" style="left:687.4px;top:312px;width:6px;height:2px;background:#2f7a35"></div>
<div class="a" style="left:696.90px;top:310.50px;font-size:5.2px;line-height:5.2px;color:#555;font-weight:normal;"><span class="j" style="width:4.75px;color:#777;-webkit-text-stroke:0.25px #777">イ</span><span class="j" style="width:4.75px;color:#777;-webkit-text-stroke:0.25px #777">ン</span><span class="j" style="width:4.75px;color:#777;-webkit-text-stroke:0.25px #777">ス</span><span class="j" style="width:4.75px;color:#777;-webkit-text-stroke:0.25px #777">ト</span><span class="j" style="width:4.75px;color:#777;-webkit-text-stroke:0.25px #777">ー</span><span class="j" style="width:4.75px;color:#777;-webkit-text-stroke:0.25px #777">ル</span><span class="j" style="width:4.75px;color:#777;-webkit-text-stroke:0.25px #777">済</span><span class="j" style="width:4.75px;color:#777;-webkit-text-stroke:0.25px #777">み</span></div>
<div class="a" style="left:734.90px;top:310.50px;font-size:5.4px;line-height:5.4px;color:#555;font-weight:normal;transform:scaleX(1.1125);transform-origin:0 0;"> - (mac)</div>
<div class="a" style="left:975.50px;top:310.50px;font-size:5.4px;line-height:5.4px;color:#555;font-weight:normal;">304</div>
<div class="a" style="left:998.70px;top:310.50px;font-size:5.4px;line-height:5.4px;color:#555;font-weight:normal;">14%</div>
<div class="r" style="left:687.4px;top:321px;width:6px;height:2px;background:#a33038"></div>
<div class="a" style="left:696.90px;top:320.50px;font-size:5.2px;line-height:5.2px;color:#555;font-weight:normal;"><span class="j" style="width:4.75px;color:#777;-webkit-text-stroke:0.25px #777">イ</span><span class="j" style="width:4.75px;color:#777;-webkit-text-stroke:0.25px #777">ン</span><span class="j" style="width:4.75px;color:#777;-webkit-text-stroke:0.25px #777">ス</span><span class="j" style="width:4.75px;color:#777;-webkit-text-stroke:0.25px #777">ト</span><span class="j" style="width:4.75px;color:#777;-webkit-text-stroke:0.25px #777">ー</span><span class="j" style="width:4.75px;color:#777;-webkit-text-stroke:0.25px #777">ル</span><span class="j" style="width:4.75px;color:#777;-webkit-text-stroke:0.25px #777">さ</span><span class="j" style="width:4.75px;color:#777;-webkit-text-stroke:0.25px #777">れ</span><span class="j" style="width:4.75px;color:#777;-webkit-text-stroke:0.25px #777">て</span><span class="j" style="width:4.75px;color:#777;-webkit-text-stroke:0.25px #777">い</span><span class="j" style="width:4.75px;color:#777;-webkit-text-stroke:0.25px #777">ま</span><span class="j" style="width:4.75px;color:#777;-webkit-text-stroke:0.25px #777">せ</span><span class="j" style="width:4.75px;color:#777;-webkit-text-stroke:0.25px #777">ん</span></div>
<div class="a" style="left:758.65px;top:320.50px;font-size:5.4px;line-height:5.4px;color:#555;font-weight:normal;transform:scaleX(1.0603);transform-origin:0 0;"> - (Windows)</div>
<div class="a" style="left:978.50px;top:320.50px;font-size:5.4px;line-height:5.4px;color:#555;font-weight:normal;">46</div>
<div class="a" style="left:1001.70px;top:320.50px;font-size:5.4px;line-height:5.4px;color:#555;font-weight:normal;">2%</div>
<div class="r" style="left:681.1px;top:334.9px;width:334.4px;height:41.5px;background:#fff"></div>
<div class="a" style="left:684.60px;top:338.50px;font-size:6.2px;line-height:6.2px;color:#444;font-weight:normal;transform:scaleX(0.9099);transform-origin:0 0;">EDR</div>
<div class="a" style="left:696.50px;top:339.50px;font-size:5.8px;line-height:5.8px;color:#444;font-weight:normal;transform:scaleX(1.0024);transform-origin:0 0;"><span class="j" style="width:5.67px;color:#666;-webkit-text-stroke:0.25px #666">ソ</span><span class="j" style="width:5.67px;color:#666;-webkit-text-stroke:0.25px #666">リ</span><span class="j" style="width:5.67px;color:#666;-webkit-text-stroke:0.25px #666">ュ</span><span class="j" style="width:5.67px;color:#666;-webkit-text-stroke:0.25px #666">ー</span><span class="j" style="width:5.67px;color:#666;-webkit-text-stroke:0.25px #666">シ</span><span class="j" style="width:5.67px;color:#666;-webkit-text-stroke:0.25px #666">ョ</span><span class="j" style="width:5.67px;color:#666;-webkit-text-stroke:0.25px #666">ン</span><span class="j" style="width:5.67px;color:#666;-webkit-text-stroke:0.25px #666">更</span><span class="j" style="width:5.67px;color:#666;-webkit-text-stroke:0.25px #666">新</span><span class="j" style="width:5.67px;color:#666;-webkit-text-stroke:0.25px #666">状</span><span class="j" style="width:5.67px;color:#666;-webkit-text-stroke:0.25px #666">況</span></div>
<div class="r" style="left:681.1px;top:347.79999999999995px;width:334.4px;height:28.6px;background:linear-gradient(90deg,#fbe42e,#db9125)"></div>
<div class="a" style="left:825.00px;top:354.50px;font-size:19.6px;line-height:19.6px;color:#fff;font-weight:normal;transform:scaleX(0.9177);transform-origin:0 0;-webkit-text-stroke:0.45px #fff">79.9</div>
<div class="a" style="left:862.30px;top:358.50px;font-size:12.8px;line-height:12.8px;color:#fff;font-weight:normal;transform:scaleX(0.8779);transform-origin:0 0;-webkit-text-stroke:0.25px #fff">%</div>
<div class="r" style="left:681.1px;top:380.6px;width:334.4px;height:118.3px;background:#fff"></div>
<div class="a" style="left:970.00px;top:459.50px;font-size:5.4px;line-height:5.4px;color:#4a6bb5;font-weight:normal;transform:scaleX(1.0828);transform-origin:0 0;">Value</div>
<div class="a" style="left:991.40px;top:459.50px;font-size:5.4px;line-height:5.4px;color:#4a6bb5;font-weight:normal;transform:scaleX(0.9743);transform-origin:0 0;">Percent</div>
<div class="r" style="left:684.6px;top:466.49999999999994px;width:328.2px;height:0.6px;background:#ebebeb"></div>
<div class="r" style="left:684.6px;top:476.09999999999997px;width:328.2px;height:0.6px;background:#ebebeb"></div>
<div class="r" style="left:684.6px;top:485.7px;width:328.2px;height:0.6px;background:#ebebeb"></div>
<div class="r" style="left:684.6px;top:495.59999999999997px;width:328.2px;height:0.6px;background:#ebebeb"></div>
<div class="r" style="left:687.4px;top:471px;width:6px;height:2px;background:#2f7a35"></div>
<div class="a" style="left:696.90px;top:469.50px;font-size:5.2px;line-height:5.2px;color:#555;font-weight:normal;"><span class="j" style="width:4.75px;color:#777;-webkit-text-stroke:0.25px #777">最</span><span class="j" style="width:4.75px;color:#777;-webkit-text-stroke:0.25px #777">新</span><span class="j" style="width:4.75px;color:#777;-webkit-text-stroke:0.25px #777">バ</span><span class="j" style="width:4.75px;color:#777;-webkit-text-stroke:0.25px #777">ー</span><span class="j" style="width:4.75px;color:#777;-webkit-text-stroke:0.25px #777">ジ</span><span class="j" style="width:4.75px;color:#777;-webkit-text-stroke:0.25px #777">ョ</span><span class="j" style="width:4.75px;color:#777;-webkit-text-stroke:0.25px #777">ン</span></div>
<div class="a" style="left:730.15px;top:469.50px;font-size:5.4px;line-height:5.4px;color:#555;font-weight:normal;transform:scaleX(1.0603);transform-origin:0 0;"> - (Windows)</div>
<div class="a" style="left:972.50px;top:469.50px;font-size:5.4px;line-height:5.4px;color:#555;font-weight:normal;">1508</div>
<div class="a" style="left:998.70px;top:469.50px;font-size:5.4px;line-height:5.4px;color:#555;font-weight:normal;">69%</div>
<div class="r" style="left:687.4px;top:480px;width:6px;height:2px;background:#a33038"></div>
<div class="a" style="left:696.90px;top:479.50px;font-size:5.2px;line-height:5.2px;color:#555;font-weight:normal;"><span class="j" style="width:4.75px;color:#777;-webkit-text-stroke:0.25px #777">未</span><span class="j" style="width:4.75px;color:#777;-webkit-text-stroke:0.25px #777">更</span><span class="j" style="width:4.75px;color:#777;-webkit-text-stroke:0.25px #777">新</span></div>
<div class="a" style="left:711.15px;top:479.50px;font-size:5.4px;line-height:5.4px;color:#555;font-weight:normal;transform:scaleX(1.0603);transform-origin:0 0;"> - (Windows)</div>
<div class="a" style="left:975.50px;top:479.50px;font-size:5.4px;line-height:5.4px;color:#555;font-weight:normal;">377</div>
<div class="a" style="left:998.70px;top:479.50px;font-size:5.4px;line-height:5.4px;color:#555;font-weight:normal;">17%</div>
<div class="r" style="left:687.4px;top:490px;width:6px;height:2px;background:#2f7a35"></div>
<div class="a" style="left:696.90px;top:489.50px;font-size:5.2px;line-height:5.2px;color:#555;font-weight:normal;"><span class="j" style="width:4.75px;color:#777;-webkit-text-stroke:0.25px #777">最</span><span class="j" style="width:4.75px;color:#777;-webkit-text-stroke:0.25px #777">新</span><span class="j" style="width:4.75px;color:#777;-webkit-text-stroke:0.25px #777">バ</span><span class="j" style="width:4.75px;color:#777;-webkit-text-stroke:0.25px #777">ー</span><span class="j" style="width:4.75px;color:#777;-webkit-text-stroke:0.25px #777">ジ</span><span class="j" style="width:4.75px;color:#777;-webkit-text-stroke:0.25px #777">ョ</span><span class="j" style="width:4.75px;color:#777;-webkit-text-stroke:0.25px #777">ン</span></div>
<div class="a" style="left:730.15px;top:489.50px;font-size:5.4px;line-height:5.4px;color:#555;font-weight:normal;transform:scaleX(1.1125);transform-origin:0 0;"> - (mac)</div>
<div class="a" style="left:975.50px;top:489.50px;font-size:5.4px;line-height:5.4px;color:#555;font-weight:normal;">240</div>
<div class="a" style="left:999.11px;top:489.50px;font-size:5.4px;line-height:5.4px;color:#555;font-weight:normal;">11%</div>
<svg class="r" style="left:0;top:0" width="1024" height="501"><path d="M170.85,222.00 A30.0,30.0 0 1 1 145.52,235.93 L153.46,240.96 A20.6,20.6 0 1 0 170.85,231.40 Z" fill="#0ca92a"/><path d="M145.52,235.93 A30.0,30.0 0 0 1 167.09,222.24 L168.27,231.56 A20.6,20.6 0 0 0 153.46,240.96 Z" fill="#0ca92a"/><path d="M167.09,222.24 A30.0,30.0 0 0 1 170.85,222.00 L170.85,231.40 A20.6,20.6 0 0 0 168.27,231.56 Z" fill="#e8292a"/><line x1="170.85" y1="231.90" x2="170.85" y2="221.50" stroke="#fff" stroke-width="0.8"/><line x1="153.88" y1="241.23" x2="145.10" y2="235.66" stroke="#fff" stroke-width="0.8"/><line x1="168.33" y1="232.06" x2="167.03" y2="221.74" stroke="#fff" stroke-width="0.8"/><path d="M170.85,390.60 A30.0,30.0 0 1 1 144.56,435.05 L152.80,430.52 A20.6,20.6 0 1 0 170.85,400.00 Z" fill="#0ca92a"/><path d="M144.56,435.05 A30.0,30.0 0 0 1 147.73,401.48 L154.98,407.47 A20.6,20.6 0 0 0 152.80,430.52 Z" fill="#e8292a"/><path d="M147.73,401.48 A30.0,30.0 0 0 1 163.39,391.54 L165.73,400.65 A20.6,20.6 0 0 0 154.98,407.47 Z" fill="#0ca92a"/><path d="M163.39,391.54 A30.0,30.0 0 0 1 170.85,390.60 L170.85,400.00 A20.6,20.6 0 0 0 165.73,400.65 Z" fill="#e8292a"/><line x1="170.85" y1="400.50" x2="170.85" y2="390.10" stroke="#fff" stroke-width="0.8"/><line x1="153.24" y1="430.28" x2="144.12" y2="435.29" stroke="#fff" stroke-width="0.8"/><line x1="155.36" y1="407.79" x2="147.35" y2="401.16" stroke="#fff" stroke-width="0.8"/><line x1="165.85" y1="401.13" x2="163.26" y2="391.06" stroke="#fff" stroke-width="0.8"/><path d="M509.55,222.00 A30.0,30.0 0 1 1 484.22,235.93 L492.16,240.96 A20.6,20.6 0 1 0 509.55,231.40 Z" fill="#0ca92a"/><path d="M484.22,235.93 A30.0,30.0 0 0 1 503.93,222.53 L505.69,231.76 A20.6,20.6 0 0 0 492.16,240.96 Z" fill="#0ca92a"/><path d="M503.93,222.53 A30.0,30.0 0 0 1 509.55,222.00 L509.55,231.40 A20.6,20.6 0 0 0 505.69,231.76 Z" fill="#e8292a"/><line x1="509.55" y1="231.90" x2="509.55" y2="221.50" stroke="#fff" stroke-width="0.8"/><line x1="492.58" y1="241.23" x2="483.80" y2="235.66" stroke="#fff" stroke-width="0.8"/><line x1="505.78" y1="232.26" x2="503.83" y2="222.04" stroke="#fff" stroke-width="0.8"/><path d="M509.55,390.60 A30.0,30.0 0 1 1 481.66,431.64 L490.40,428.18 A20.6,20.6 0 1 0 509.55,400.00 Z" fill="#0ca92a"/><path d="M481.66,431.64 A30.0,30.0 0 0 1 486.43,401.48 L493.68,407.47 A20.6,20.6 0 0 0 490.40,428.18 Z" fill="#e8292a"/><path d="M486.43,401.48 A30.0,30.0 0 0 1 503.93,391.13 L505.69,400.36 A20.6,20.6 0 0 0 493.68,407.47 Z" fill="#0ca92a"/><path d="M503.93,391.13 A30.0,30.0 0 0 1 509.55,390.60 L509.55,400.00 A20.6,20.6 0 0 0 505.69,400.36 Z" fill="#e8292a"/><line x1="509.55" y1="400.50" x2="509.55" y2="390.10" stroke="#fff" stroke-width="0.8"/><line x1="490.86" y1="428.00" x2="481.19" y2="431.83" stroke="#fff" stroke-width="0.8"/><line x1="494.06" y1="407.79" x2="486.05" y2="401.16" stroke="#fff" stroke-width="0.8"/><line x1="505.78" y1="400.86" x2="503.83" y2="390.64" stroke="#fff" stroke-width="0.8"/><path d="M848.30,222.00 A30.0,30.0 0 1 1 822.97,235.93 L830.91,240.96 A20.6,20.6 0 1 0 848.30,231.40 Z" fill="#0ca92a"/><path d="M822.97,235.93 A30.0,30.0 0 0 1 844.54,222.24 L845.72,231.56 A20.6,20.6 0 0 0 830.91,240.96 Z" fill="#0ca92a"/><path d="M844.54,222.24 A30.0,30.0 0 0 1 848.30,222.00 L848.30,231.40 A20.6,20.6 0 0 0 845.72,231.56 Z" fill="#e8292a"/><line x1="848.30" y1="231.90" x2="848.30" y2="221.50" stroke="#fff" stroke-width="0.8"/><line x1="831.33" y1="241.23" x2="822.55" y2="235.66" stroke="#fff" stroke-width="0.8"/><line x1="845.78" y1="232.06" x2="844.48" y2="221.74" stroke="#fff" stroke-width="0.8"/><path d="M848.30,390.60 A30.0,30.0 0 1 1 820.41,431.64 L829.15,428.18 A20.6,20.6 0 1 0 848.30,400.00 Z" fill="#0ca92a"/><path d="M820.41,431.64 A30.0,30.0 0 0 1 825.18,401.48 L832.43,407.47 A20.6,20.6 0 0 0 829.15,428.18 Z" fill="#e8292a"/><path d="M825.18,401.48 A30.0,30.0 0 0 1 842.68,391.13 L844.44,400.36 A20.6,20.6 0 0 0 832.43,407.47 Z" fill="#0ca92a"/><path d="M842.68,391.13 A30.0,30.0 0 0 1 848.30,390.60 L848.30,400.00 A20.6,20.6 0 0 0 844.44,400.36 Z" fill="#e8292a"/><line x1="848.30" y1="400.50" x2="848.30" y2="390.10" stroke="#fff" stroke-width="0.8"/><line x1="829.61" y1="428.00" x2="819.94" y2="431.83" stroke="#fff" stroke-width="0.8"/><line x1="832.81" y1="407.79" x2="824.80" y2="401.16" stroke="#fff" stroke-width="0.8"/><line x1="844.53" y1="400.86" x2="842.58" y2="390.64" stroke="#fff" stroke-width="0.8"/></svg>
</body></html>
